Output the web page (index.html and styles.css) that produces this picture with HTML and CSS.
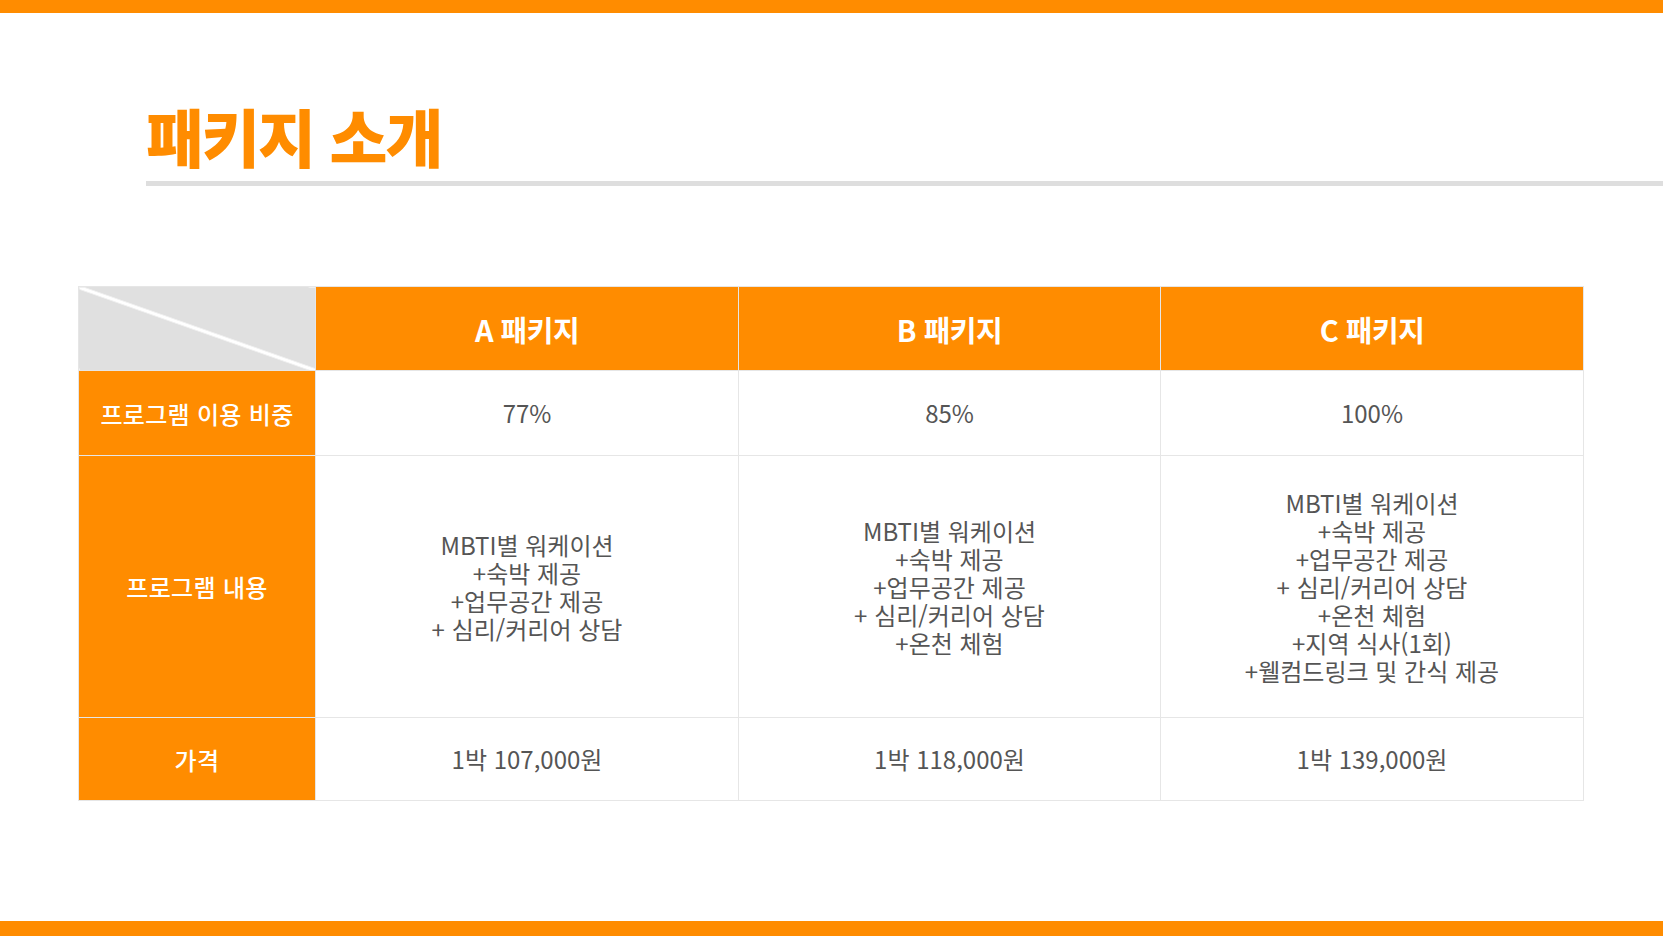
FILE: index.html
```html
<!DOCTYPE html>
<html lang="ko">
<head>
<meta charset="utf-8">
<link rel="stylesheet" href="styles.css">
</head>
<body>
<div class="page">
  <div class="bar"></div>
  <main class="main">
    <header class="head">
      <h1 class="title">패키지 소개</h1>
      <div class="rule"></div>
    </header>
    <table class="pkg">
      <colgroup>
        <col class="c0"><col class="c1"><col class="c2"><col class="c3">
      </colgroup>
      <tr class="r-head">
        <th class="corner"></th>
        <th class="hcell">A 패키지</th>
        <th class="hcell">B 패키지</th>
        <th class="hcell">C 패키지</th>
      </tr>
      <tr class="r1">
        <th class="rh">프로그램 이용 비중</th>
        <td>77%</td>
        <td>85%</td>
        <td>100%</td>
      </tr>
      <tr class="r2">
        <th class="rh">프로그램 내용</th>
        <td>MBTI별 워케이션<br>+숙박 제공<br>+업무공간 제공<br>+ 심리/커리어 상담</td>
        <td>MBTI별 워케이션<br>+숙박 제공<br>+업무공간 제공<br>+ 심리/커리어 상담<br>+온천 체험</td>
        <td>MBTI별 워케이션<br>+숙박 제공<br>+업무공간 제공<br>+ 심리/커리어 상담<br>+온천 체험<br>+지역 식사(1회)<br>+웰컴드링크 및 간식 제공</td>
      </tr>
      <tr class="r3">
        <th class="rh">가격</th>
        <td>1박 107,000원</td>
        <td>1박 118,000원</td>
        <td>1박 139,000원</td>
      </tr>
    </table>
  </main>
  <div class="bar bar-bottom"></div>
</div>
</body>
</html>
```
FILE: styles.css
```css
html, body {
  margin: 0;
  padding: 0;
  background: #fff;
}
body {
  font-family: "Noto Sans CJK KR", "Noto Sans", sans-serif;
}
.page {
  width: 1663px;
  height: 936px;
  display: flex;
  flex-direction: column;
  overflow: hidden;
}
.bar {
  height: 13px;
  background: #ff8c00;
  flex: none;
}
.bar-bottom {
  height: 15px;
}
.main {
  flex: 1;
  display: flex;
  flex-direction: column;
}
.head {
  padding-left: 146px;
  padding-top: 86px;
}
.title {
  margin: 0;
  font-size: 63px;
  line-height: 72px;
  font-weight: 900;
  color: #ff8c00;
  letter-spacing: -2px;
}
.rule {
  margin-top: 10px;
  height: 5px;
  background: #dedede;
}
.pkg {
  margin-top: 100px;
  margin-left: 78px;
  width: 1505px;
  border-collapse: collapse;
  table-layout: fixed;
  font-size: 24px;
  color: #555;
}
.c0 { width: 237px; }
.c1 { width: 423px; }
.c2 { width: 422px; }
.c3 { width: 423px; }
.pkg th, .pkg td {
  border: 1px solid #e6e6e6;
  text-align: center;
  vertical-align: middle;
  padding: 0;
}
.pkg td {
  line-height: 28px;
  font-weight: 400;
}
.r-head { height: 84px; }
.r1 { height: 85px; }
.r2 { height: 262px; }
.r3 { height: 83px; }
.corner {
  background-color: #e0e0e0;
  background-image: linear-gradient(to top right, transparent calc(50% - 2px), #fff calc(50% - 1.5px), #fff calc(50% + 1.5px), transparent calc(50% + 2px));
}
.hcell {
  background: #ff8c00;
  color: #fff;
  font-size: 29px;
  font-weight: 700;
  letter-spacing: -0.5px;
}
.rh {
  background: #ff8c00;
  color: #fff;
  font-size: 24px;
  font-weight: 500;
  letter-spacing: 0.3px;
}
```
